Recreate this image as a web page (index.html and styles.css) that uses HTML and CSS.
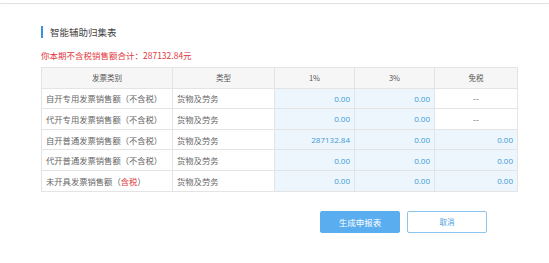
FILE: index.html
```html
<!DOCTYPE html>
<html lang="zh-CN">
<head>
  <meta charset="UTF-8">
  <title>智能辅助归集表</title>
  <link rel="stylesheet" href="styles.css">
</head>
<body>
  <div class="top-line"></div>
  <div class="panel">
    <h2 class="panel-title">智能辅助归集表</h2>
    <p class="total-tip">你本期不含税销售额合计：287132.84元</p>

    <table class="sum-table">
      <colgroup>
        <col class="c-cat">
        <col class="c-type">
        <col class="c-num">
        <col class="c-num">
        <col class="c-free">
      </colgroup>
      <thead>
        <tr>
          <th>发票类别</th>
          <th>类型</th>
          <th>1%</th>
          <th>3%</th>
          <th>免税</th>
        </tr>
      </thead>
      <tbody>
        <tr>
          <td>自开专用发票销售额（不含税）</td>
          <td>货物及劳务</td>
          <td class="num">0.00</td>
          <td class="num">0.00</td>
          <td class="empty">--</td>
        </tr>
        <tr>
          <td>代开专用发票销售额（不含税）</td>
          <td>货物及劳务</td>
          <td class="num">0.00</td>
          <td class="num">0.00</td>
          <td class="empty">--</td>
        </tr>
        <tr>
          <td>自开普通发票销售额（不含税）</td>
          <td>货物及劳务</td>
          <td class="num">287132.84</td>
          <td class="num">0.00</td>
          <td class="num">0.00</td>
        </tr>
        <tr>
          <td>代开普通发票销售额（不含税）</td>
          <td>货物及劳务</td>
          <td class="num">0.00</td>
          <td class="num">0.00</td>
          <td class="num">0.00</td>
        </tr>
        <tr>
          <td>未开具发票销售额（<span class="red">含税</span>）</td>
          <td>货物及劳务</td>
          <td class="num">0.00</td>
          <td class="num">0.00</td>
          <td class="num">0.00</td>
        </tr>
      </tbody>
    </table>

    <div class="actions">
      <button class="btn btn-primary">生成申报表</button>
      <button class="btn btn-default">取消</button>
    </div>
  </div>
</body>
</html>
```

FILE: styles.css
```css
body {
  margin: 0;
  background: #fff;
  font-family: "Noto Sans CJK SC", "Noto Sans", sans-serif;
  color: #555;
}

.top-line {
  margin-top: 3px;
  height: 1px;
  background: #e2e2e2;
  box-shadow: 0 1px 3px rgba(0, 0, 0, 0.06);
}

.panel {
  padding: 22px 0 0 41px;
}

.panel-title {
  margin: 0;
  height: 12px;
  line-height: 12px;
  padding-left: 7px;
  border-left: 2px solid #3d8fe0;
  font-size: 9.5px;
  font-weight: normal;
  color: #444;
}

.total-tip {
  margin: 11px 0 0;
  line-height: 12px;
  font-size: 8.5px;
  color: #e2383c;
}

.sum-table {
  margin-top: 6px;
  width: 476px;
  border-collapse: collapse;
  table-layout: fixed;
  font-size: 8.3px;
}

.c-cat { width: 131px; }
.c-type { width: 102px; }
.c-num { width: 80px; }
.c-free { width: 83px; }

.sum-table th,
.sum-table td {
  border: 1px solid #e4e4e4;
  height: 19.6px;
  padding: 0 4px;
  white-space: nowrap;
  overflow: hidden;
}

.sum-table th {
  background: #f6f6f6;
  font-weight: normal;
  font-size: 7.5px;
  color: #555;
  text-align: center;
}

.sum-table td {
  color: #666;
}

.sum-table td.num {
  background: #eef6fd;
  color: #3a98d6;
  text-align: right;
  font-family: "Open Sans", "Noto Sans", sans-serif;
  font-size: 8px;
}

.sum-table td.empty {
  text-align: center;
  color: #666;
}

.red {
  color: #e2383c;
}

.actions {
  display: flex;
  gap: 7px;
  margin: 19px 0 0 279px;
}

.btn {
  width: 80px;
  height: 22px;
  border-radius: 2px;
  font-family: inherit;
  font-size: 8.5px;
  cursor: pointer;
}

.btn-primary {
  background: #5aaef0;
  border: 1px solid #5aaef0;
  color: #fff;
}

.btn-default {
  background: #fff;
  border: 1px solid #8cc4ee;
  color: #4a9ee0;
  font-size: 7.5px;
}
```
